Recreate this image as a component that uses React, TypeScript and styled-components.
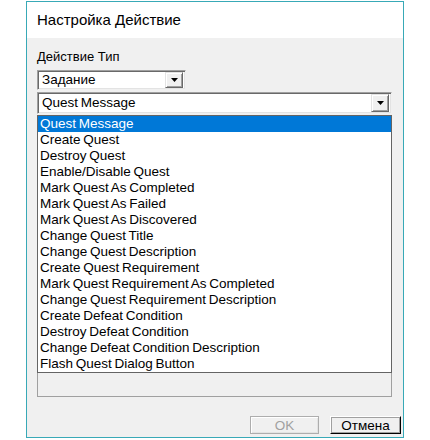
import React from "react";
import styled, { createGlobalStyle } from "styled-components";

const Global = createGlobalStyle`
  html, body { margin: 0; padding: 0; background: #ffffff; }
  body { font-family: "Liberation Sans", Arial, sans-serif; }
`;

const Page = styled.div`
  padding: 1px 0 0 26px;
`;

const Window = styled.div`
  box-sizing: border-box;
  width: 378px;
  height: 437px;
  border: 1px solid #38a9b7;
  background: #f0f0f0;
  display: flex;
  flex-direction: column;
`;

const Header = styled.div`
  height: 36px;
  background: #ffffff;
  display: flex;
  align-items: center;
  padding: 0 0 1px 10px;
  box-sizing: border-box;
  font-size: 15px;
  color: #000;
`;

const Body = styled.div`
  flex: 1;
  display: flex;
  flex-direction: column;
  padding: 11px 0 0 10px;
`;

const Label = styled.div`
  font-size: 13px;
  line-height: 16px;
  color: #000;
  margin-bottom: 5px;
`;

const Combo = styled.div<{ $w: number; $h: number; $mb: number }>`
  box-sizing: border-box;
  width: ${(p) => p.$w}px;
  height: ${(p) => p.$h}px;
  margin-bottom: ${(p) => p.$mb}px;
  background: #ffffff;
  border-style: solid;
  border-width: 1px;
  border-color: #a0a0a0 #f0f0f0 #f0f0f0 #a0a0a0;
  box-shadow: inset 1px 1px 0 #696969, inset -1px -1px 0 #e3e3e3;
  display: flex;
  align-items: center;
  padding: 1px 2px 1px 4px;
`;

const ComboText = styled.div`
  flex: 1;
  font-size: 13.5px;
  line-height: 16px;
  word-spacing: -1px;
  color: #000;
  white-space: nowrap;
`;

const DropButton = styled.div<{ $h: number }>`
  box-sizing: border-box;
  width: 18px;
  height: ${(p) => p.$h}px;
  background: #f0f0f0;
  border-style: solid;
  border-width: 1px;
  border-color: #e3e3e3 #696969 #696969 #e3e3e3;
  box-shadow: inset 1px 1px 0 #ffffff, inset -1px -1px 0 #a0a0a0;
  display: flex;
  align-items: center;
  justify-content: center;
`;

const Panel = styled.div`
  position: relative;
  box-sizing: border-box;
  width: 355px;
  height: 282px;
  margin-top: 1px;
  background: #f0f0f0;
  border: 1px solid #a0a0a0;
`;

const DropList = styled.div`
  position: absolute;
  left: -1px;
  top: -1px;
  right: -1px;
  box-sizing: border-box;
  background: #ffffff;
  border: 1px solid #646464;
  display: flex;
  flex-direction: column;
`;

const Item = styled.div<{ $sel?: boolean }>`
  height: 16px;
  line-height: 16px;
  font-size: 13.5px;
  word-spacing: -1px;
  padding-left: 2px;
  white-space: nowrap;
  color: ${(p) => (p.$sel ? "#ffffff" : "#000000")};
  background: ${(p) => (p.$sel ? "#0078d7" : "transparent")};
`;

const Footer = styled.div`
  display: flex;
  justify-content: flex-end;
  gap: 11px;
  margin-top: 19px;
  padding-right: 2px;
`;

const Button = styled.div<{ $disabled?: boolean; $w: number }>`
  box-sizing: border-box;
  width: ${(p) => p.$w}px;
  height: 18px;
  display: flex;
  align-items: center;
  justify-content: center;
  font-size: 13.5px;
  background: #f0f0f0;
  color: ${(p) => (p.$disabled ? "#a0a0a0" : "#000000")};
  border-style: solid;
  border-width: 1px;
  border-color: ${(p) =>
    p.$disabled ? "#adadad" : "#ffffff #000000 #000000 #ffffff"};
  box-shadow: ${(p) =>
    p.$disabled
      ? "inset 1px 1px 0 #ffffff, inset -1px -1px 0 #e3e3e3"
      : "inset 1px 1px 0 #a0a0a0, inset -1px -1px 0 #a0a0a0"};
`;

const Arrow = () => (
  <svg width="7" height="4" viewBox="0 0 7 4">
    <polygon points="0,0 7,0 3.5,4" fill="#000" />
  </svg>
);

const items = [
  "Quest Message",
  "Create Quest",
  "Destroy Quest",
  "Enable/Disable Quest",
  "Mark Quest As Completed",
  "Mark Quest As Failed",
  "Mark Quest As Discovered",
  "Change Quest Title",
  "Change Quest Description",
  "Create Quest Requirement",
  "Mark Quest Requirement As Completed",
  "Change Quest Requirement Description",
  "Create Defeat Condition",
  "Destroy Defeat Condition",
  "Change Defeat Condition Description",
  "Flash Quest Dialog Button",
];

export default function App() {
  return (
    <>
      <Global />
      <Page>
        <Window>
          <Header>Настройка Действие</Header>
          <Body>
            <Label>Действие Тип</Label>
            <Combo $w={149} $h={20} $mb={2}>
              <ComboText>Задание</ComboText>
              <DropButton $h={16}>
                <Arrow />
              </DropButton>
            </Combo>
            <Combo $w={355} $h={22} $mb={0}>
              <ComboText>Quest Message</ComboText>
              <DropButton $h={18}>
                <Arrow />
              </DropButton>
            </Combo>
            <Panel>
              <DropList>
                {items.map((t, i) => (
                  <Item key={t} $sel={i === 0}>
                    {t}
                  </Item>
                ))}
              </DropList>
            </Panel>
            <Footer>
              <Button $disabled $w={69}>
                OK
              </Button>
              <Button $w={71}>Отмена</Button>
            </Footer>
          </Body>
        </Window>
      </Page>
    </>
  );
}
